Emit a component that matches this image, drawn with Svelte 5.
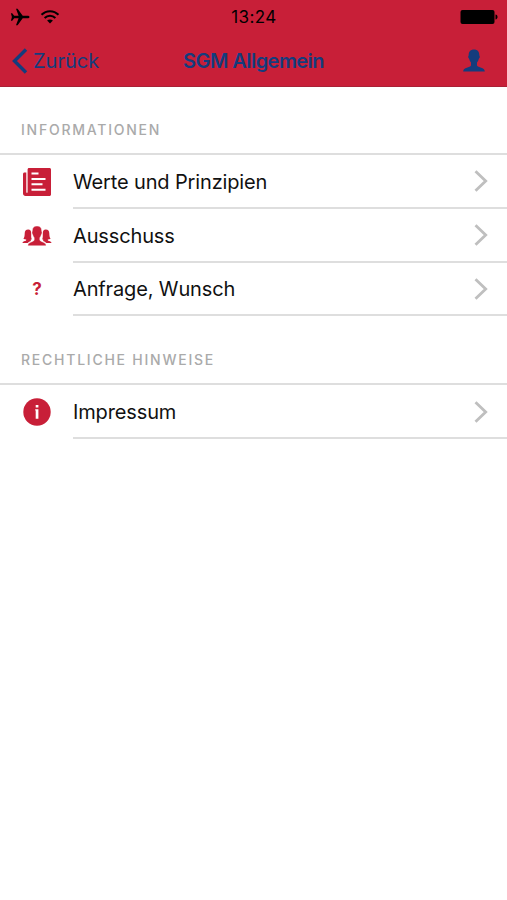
<script lang="ts">
    let title = 'SGM Allgemein';

    // Menüpunkte, nach Abschnitten gruppiert
    let sections = [
        {
            heading: 'Informationen',
            items: [
                { label: 'Werte und Prinzipien', icon: 'news' },
                { label: 'Ausschuss', icon: 'group' },
                { label: 'Anfrage, Wunsch', icon: 'question' }
            ]
        },
        {
            heading: 'Rechtliche Hinweise',
            items: [
                { label: 'Impressum', icon: 'info' }
            ]
        }
    ];
</script>

<svelte:head>
    <title>{title}</title>
</svelte:head>

<header>
    <div class="status">
        <div class="signal">
            <svg width="20" height="18" viewBox="0 0 20 18">
                <path d="M19.5 9c0-.9-.9-1.300-2-1.300h-4.800L7.600.8H6l2.600 6.900H4.200L2.200 5.200H.9L1.900 9l-1 3.800h1.300l2-2.500h4.400L6 17.200h1.600l5.100-6.900h4.800c1.100 0 2-.4 2-1.300z" />
            </svg>
            <svg width="20" height="16" viewBox="0 0 20 16">
                <path d="M1.500 5.800C6.300.9 13.700.9 18.500 5.800M4.600 9c3.100-3 7.700-3 10.800 0" fill="none" stroke="#000" stroke-width="2" />
                <path d="M10 14.500l-2.900-2.900c1.700-1.500 4.100-1.500 5.800 0z" />
            </svg>
        </div>
        <span class="time">13:24</span>
        <svg class="battery" width="38" height="16" viewBox="0 0 38 16">
            <rect x=".5" y="1" width="34" height="14" rx="2" />
            <path d="M35.500 5.500c1.300.3 2 1.200 2 2.500s-.7 2.200-2 2.500z" />
        </svg>
    </div>

    <nav>
        <button class="back">
            <svg width="16" height="26" viewBox="0 0 16 26">
                <path d="M14 1.500L2.500 13 14 24.500" fill="none" stroke="#143c7d" stroke-width="3.400" />
            </svg>
            <span>Zurück</span>
        </button>
        <h1>{title}</h1>
        <button class="profile" aria-label="Profil">
            <svg width="22" height="23" viewBox="0 0 22 23">
                <path d="M11 .5c3.400 0 5.300 2.200 5.300 5.400 0 1 .6 1.100.5 2.200-.1 1-.7 1.300-1 2-.4 1.600-1 2.600-1.800 3.400v3c.8 2 7.800 1.800 7.800 6H.2c0-4.200 7-4 7.800-6v-3c-.8-.8-1.400-1.800-1.800-3.400-.3-.7-.9-1-1-2-.1-1.100.5-1.200.5-2.200C5.700 2.700 7.600.5 11 .5z" />
            </svg>
        </button>
    </nav>
</header>

<main>
    {#each sections as section}
        <section>
            <h2>{section.heading}</h2>
            <ul>
                {#each section.items as item}
                    <li>
                        <div class="icon">
                            {#if item.icon === 'news'}
                                <svg width="28" height="28" viewBox="0 0 28 28">
                                    <path d="M1.500 4.500h1.800v19.700c0 .8 1.300.8 1.300 0V1.500C4.600.7 5.200 0 6 0h20.500c.8 0 1.500.7 1.500 1.500v25c0 .8-.7 1.500-1.500 1.500h-24C1.100 28 0 26.900 0 25.500V6c0-.8.7-1.500 1.500-1.500z" />
                                    <path d="M8.500 5.500h7M8.500 11h14M8.500 16.300h11M8.500 21.800h14" stroke="#fff" stroke-width="1.900" />
                                </svg>
                            {:else if item.icon === 'group'}
                                <svg width="30" height="20" viewBox="0 0 30 20">
                                    <path d="M6.200 3.600C3.800 3.600 2.700 5.200 2.700 7.600c0 2.300-.3 4-1.300 5.200.7.500 1.700.7 2.800.7v.8c-.7 1.100-3.500.9-3.800 2.800h5.300c.7-1.200 1.900-1.700 3.100-2.200v-1.400c.4 0 .7-.1 1-.3-.8-1.500-.6-3.400-.6-5.600 0-2.400-.8-4-3-4z" />
                                    <path d="M23.800 3.600c2.400 0 3.500 1.600 3.500 4 0 2.300.3 4 1.300 5.200-.7.500-1.700.7-2.800.7v.8c.7 1.100 3.500.9 3.800 2.800h-5.300c-.7-1.200-1.900-1.700-3.100-2.200v-1.400c-.4 0-.7-.1-1-.3.8-1.500.6-3.400.6-5.600 0-2.400.8-4 3-4z" />
                                    <path d="M15 0c3.100 0 4.700 1.900 4.700 4.800 0 1 .5 1.200.3 2.300-.1.900-.6 1.100-.8 1.900-.3 1.200-.8 2-1.400 2.700v2.400c.7 2 6.300 1.800 6.300 5.600H5.900c0-3.800 5.600-3.600 6.300-5.600v-2.400c-.6-.7-1.100-1.500-1.400-2.700-.2-.8-.7-1-.8-1.900-.2-1.100.3-1.300.3-2.300C10.300 1.900 11.900 0 15 0z" stroke="#fff" stroke-width=".4" />
                                </svg>
                            {:else if item.icon === 'question'}
                                <span class="question">?</span>
                            {:else}
                                <svg width="28" height="28" viewBox="0 0 28 28">
                                    <circle cx="14" cy="14" r="13.700" />
                                    <path d="M12.700 7h2.700v2.500h-2.700zM12.200 11.200h3.200v9.600h-2.700v-8.300h-.5z" fill="#fff" />
                                </svg>
                            {/if}
                        </div>
                        <div class="row">
                            <span class="label">{item.label}</span>
                            <svg class="chevron" width="16" height="24" viewBox="0 0 16 24">
                                <path d="M2.500 2.200L12.700 12 2.500 21.800" />
                            </svg>
                        </div>
                    </li>
                {/each}
            </ul>
        </section>
    {/each}
</main>

<style>
    :global(body) {
        margin: 0;
        background: #fff;
        font-family: Inter, 'Liberation Sans', sans-serif;
    }

    header {
        box-sizing: border-box;
        height: 87px;
        background: #c81f38;
        border-bottom: 1px solid #a92136;
    }

    .status, nav {
        display: grid;
        grid-template-columns: 1fr auto 1fr;
        align-items: center;
    }

    .status {
        height: 34px;
        padding: 0 9px 0 10px;
    }

    .signal {
        display: flex;
        align-items: center;
        gap: 10px;
    }

    .time {
        font-size: 17px;
        letter-spacing: 0.4px;
    }

    .battery {
        justify-self: end;
    }

    nav {
        height: 53px;
        padding: 0 12px;
        color: #143c7d;
    }

    button {
        padding: 0;
        border: none;
        background: none;
        color: inherit;
        font: inherit;
        cursor: pointer;
    }

    .back {
        display: flex;
        align-items: center;
        gap: 5px;
        font-size: 20px;
    }

    h1 {
        margin: 0;
        font-size: 20px;
        font-weight: 600;
        letter-spacing: -0.55px;
    }

    .profile {
        justify-self: end;
        margin-right: 10px;
        fill: #143c7d;
    }

    svg {
        display: block;
    }

    main {
        padding-top: 1px;
    }

    h2 {
        box-sizing: border-box;
        height: 67px;
        margin: 0;
        padding: 0 21px;
        border-bottom: 2px solid #dedede;
        color: #aaa;
        font-size: 14px;
        font-weight: 500;
        line-height: 84px;
        letter-spacing: 1.76px;
        text-transform: uppercase;
    }

    section + section {
        padding-top: 2px;
    }

    ul {
        margin: 0;
        padding: 0;
        list-style: none;
    }

    li {
        display: flex;
        height: 53.8px;
    }

    .icon {
        display: flex;
        align-items: center;
        justify-content: center;
        width: 74px;
        margin-right: -1px;
        fill: #c81f38;
    }

    .question {
        color: #c81f38;
        font-size: 17px;
        font-weight: 700;
    }

    .row {
        display: flex;
        flex: 1;
        align-items: center;
        justify-content: space-between;
        padding: 1px 18px 0 0;
        border-bottom: 2px solid #dedede;
    }

    .label {
        padding-top: 1px;
        color: #111;
        font-size: 20px;
        letter-spacing: -0.14px;
    }

    .chevron {
        fill: none;
        stroke: #bfbfbf;
        stroke-width: 2.8;
    }
</style>
